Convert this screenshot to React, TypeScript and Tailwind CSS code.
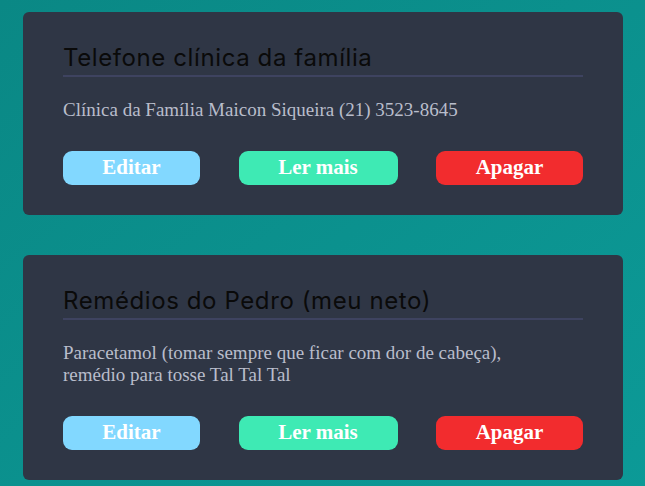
import React from "react";

const notes = [
  {
    title: "Telefone clínica da família",
    body: ["Clínica da Família Maicon Siqueira (21) 3523-8645"],
  },
  {
    title: "Remédios do Pedro (meu neto)",
    body: ["Paracetamol (tomar sempre que ficar com dor de cabeça),", "remédio para tosse Tal Tal Tal"],
  },
];

function Card({ title, body }: { title: string; body: string[] }) {
  return (
    <div className="w-[600px] rounded-[6px] bg-[#2f3645] px-[40px] pt-[31px] pb-[30px]">
      <h2
        className="border-b-2 border-[#3e4360] pb-[2px] text-[24px] leading-[30px] tracking-[0.6px] text-[#0a0a0a]"
        style={{ fontFamily: "Inter, 'Open Sans', sans-serif" }}
      >
        {title}
      </h2>
      <p
        className="mt-[22px] text-[19px] leading-[22px] text-[#b9bdcb]"
        style={{ fontFamily: "'Liberation Serif', serif" }}
      >
        {body.map((l, i) => (
          <React.Fragment key={i}>
            {l}
            {i < body.length - 1 && <br />}
          </React.Fragment>
        ))}
      </p>
      <div
        className="mt-[30px] flex justify-between text-[21px] font-bold text-white"
        style={{ fontFamily: "'Liberation Serif', serif" }}
      >
        <button className="h-[34px] w-[137px] rounded-[9px] bg-[#82d8ff]">Editar</button>
        <button className="h-[34px] w-[159px] rounded-[9px] bg-[#3eeab4]">Ler mais</button>
        <button className="h-[34px] w-[147px] rounded-[9px] bg-[#f22c2e]">Apagar</button>
      </div>
    </div>
  );
}

export default function App() {
  return (
    <div className="min-h-[486px] bg-gradient-to-br from-[#0a8885] to-[#0c9a97] pl-[23px] pt-[12px] pb-[20px]">
      <div className="flex flex-col gap-[40px]">
        {notes.map((n, i) => (
          <Card key={i} {...n} />
        ))}
      </div>
    </div>
  );
}
